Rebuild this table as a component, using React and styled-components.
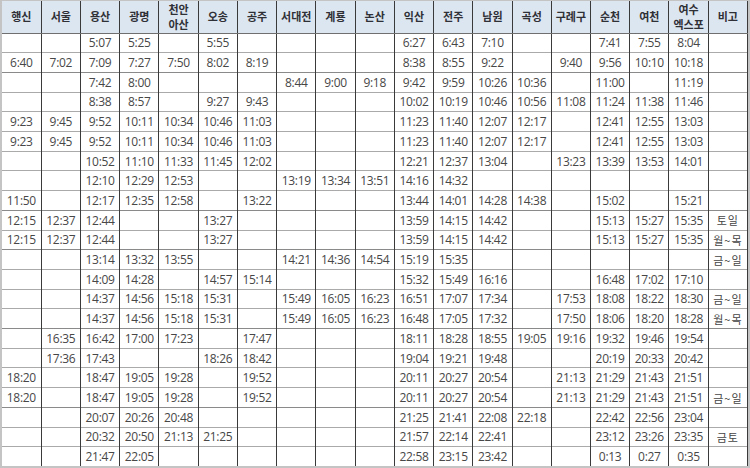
import React from 'react';
import styled, { createGlobalStyle } from 'styled-components';

const GlobalStyle = createGlobalStyle`
  html, body {
    margin: 0;
    padding: 0;
    background: #c4c4c4;
  }
  * {
    box-sizing: border-box;
  }
`;

const Frame = styled.div`
  width: 750px;
  height: 468px;
  padding: 1px 2px 2px 2px;
  background: #c4c4c4;
`;

const Table = styled.table`
  width: 100%;
  height: 100%;
  table-layout: fixed;
  border-collapse: collapse;
  background: #ffffff;
  font-family: "Open Sans", "Noto Sans CJK KR", sans-serif;
`;

const HeadCell = styled.th`
  height: 32px;
  padding: 0;
  background: #dce6f1;
  color: #2f3036;
  font-family: "Noto Sans CJK KR", sans-serif;
  font-size: 11px;
  font-weight: 700;
  line-height: 15px;
  text-align: center;
  vertical-align: middle;
  border-left: 1px solid #3a3a3a;
  border-right: 1px solid #3a3a3a;
  border-bottom: 1px solid #6f6f6f;
  &:first-child {
    border-left: none;
  }
`;

const HeadLine = styled.span`
  display: block;
  height: 15px;
  line-height: 15px;
`;

const Cell = styled.td`
  padding: 0;
  color: #474747;
  font-size: 12px;
  letter-spacing: -0.3px;
  text-align: center;
  vertical-align: middle;
  border-left: 1px solid #3a3a3a;
  border-right: 1px solid #3a3a3a;
  border-top: 1px solid ${p => (p.$strong ? '#8a8a8a' : '#aaaaaa')};
  &:first-child {
    border-left: none;
  }
`;

const Note = styled(Cell)`
  font-family: "Noto Sans CJK KR", sans-serif;
  font-size: 11px;
  letter-spacing: 1px;
  color: #444;
`;

const stations = [
  ['행신'], ['서울'], ['용산'], ['광명'], ['천안', '아산'], ['오송'], ['공주'],
  ['서대전'], ['계룡'], ['논산'], ['익산'], ['전주'], ['남원'], ['곡성'],
  ['구례구'], ['순천'], ['여천'], ['여수', '엑스포'], ['비고'],
];

const rows = [
  ['', '', '5:07', '5:25', '', '5:55', '', '', '', '', '6:27', '6:43', '7:10', '', '', '7:41', '7:55', '8:04', ''],
  ['6:40', '7:02', '7:09', '7:27', '7:50', '8:02', '8:19', '', '', '', '8:38', '8:55', '9:22', '', '9:40', '9:56', '10:10', '10:18', ''],
  ['', '', '7:42', '8:00', '', '', '', '8:44', '9:00', '9:18', '9:42', '9:59', '10:26', '10:36', '', '11:00', '', '11:19', ''],
  ['', '', '8:38', '8:57', '', '9:27', '9:43', '', '', '', '10:02', '10:19', '10:46', '10:56', '11:08', '11:24', '11:38', '11:46', ''],
  ['9:23', '9:45', '9:52', '10:11', '10:34', '10:46', '11:03', '', '', '', '11:23', '11:40', '12:07', '12:17', '', '12:41', '12:55', '13:03', ''],
  ['9:23', '9:45', '9:52', '10:11', '10:34', '10:46', '11:03', '', '', '', '11:23', '11:40', '12:07', '12:17', '', '12:41', '12:55', '13:03', ''],
  ['', '', '10:52', '11:10', '11:33', '11:45', '12:02', '', '', '', '12:21', '12:37', '13:04', '', '13:23', '13:39', '13:53', '14:01', ''],
  ['', '', '12:10', '12:29', '12:53', '', '', '13:19', '13:34', '13:51', '14:16', '14:32', '', '', '', '', '', '', ''],
  ['11:50', '', '12:17', '12:35', '12:58', '', '13:22', '', '', '', '13:44', '14:01', '14:28', '14:38', '', '15:02', '', '15:21', ''],
  ['12:15', '12:37', '12:44', '', '', '13:27', '', '', '', '', '13:59', '14:15', '14:42', '', '', '15:13', '15:27', '15:35', '토일'],
  ['12:15', '12:37', '12:44', '', '', '13:27', '', '', '', '', '13:59', '14:15', '14:42', '', '', '15:13', '15:27', '15:35', '월~목'],
  ['', '', '13:14', '13:32', '13:55', '', '', '14:21', '14:36', '14:54', '15:19', '15:35', '', '', '', '', '', '', '금~일'],
  ['', '', '14:09', '14:28', '', '14:57', '15:14', '', '', '', '15:32', '15:49', '16:16', '', '', '16:48', '17:02', '17:10', ''],
  ['', '', '14:37', '14:56', '15:18', '15:31', '', '15:49', '16:05', '16:23', '16:51', '17:07', '17:34', '', '17:53', '18:08', '18:22', '18:30', '금~일'],
  ['', '', '14:37', '14:56', '15:18', '15:31', '', '15:49', '16:05', '16:23', '16:48', '17:05', '17:32', '', '17:50', '18:06', '18:20', '18:28', '월~목'],
  ['', '16:35', '16:42', '17:00', '17:23', '', '17:47', '', '', '', '18:11', '18:28', '18:55', '19:05', '19:16', '19:32', '19:46', '19:54', ''],
  ['', '17:36', '17:43', '', '', '18:26', '18:42', '', '', '', '19:04', '19:21', '19:48', '', '', '20:19', '20:33', '20:42', ''],
  ['18:20', '', '18:47', '19:05', '19:28', '', '19:52', '', '', '', '20:11', '20:27', '20:54', '', '21:13', '21:29', '21:43', '21:51', ''],
  ['18:20', '', '18:47', '19:05', '19:28', '', '19:52', '', '', '', '20:11', '20:27', '20:54', '', '21:13', '21:29', '21:43', '21:51', '금~일'],
  ['', '', '20:07', '20:26', '20:48', '', '', '', '', '', '21:25', '21:41', '22:08', '22:18', '', '22:42', '22:56', '23:04', ''],
  ['', '', '20:32', '20:50', '21:13', '21:25', '', '', '', '', '21:57', '22:14', '22:41', '', '', '23:12', '23:26', '23:35', '금토'],
  ['', '', '21:47', '22:05', '', '', '', '', '', '', '22:58', '23:15', '23:42', '', '', '0:13', '0:27', '0:35', ''],
];

// rows whose top line shows darker in the scan
const strongLines = [2, 9, 11, 15, 19];

export default function App() {
  return (
    <>
      <GlobalStyle />
      <Frame>
        <Table>
          <thead>
            <tr>
              {stations.map((name, i) => (
                <HeadCell key={i}>
                  {name.map((part, j) => (
                    <HeadLine key={j}>{part}</HeadLine>
                  ))}
                </HeadCell>
              ))}
            </tr>
          </thead>
          <tbody>
            {rows.map((row, r) => (
              <tr key={r}>
                {row.map((value, c) =>
                  c === row.length - 1 ? (
                    <Note key={c} $strong={strongLines.includes(r)}>{value}</Note>
                  ) : (
                    <Cell key={c} $strong={strongLines.includes(r)}>{value}</Cell>
                  )
                )}
              </tr>
            ))}
          </tbody>
        </Table>
      </Frame>
    </>
  );
}
